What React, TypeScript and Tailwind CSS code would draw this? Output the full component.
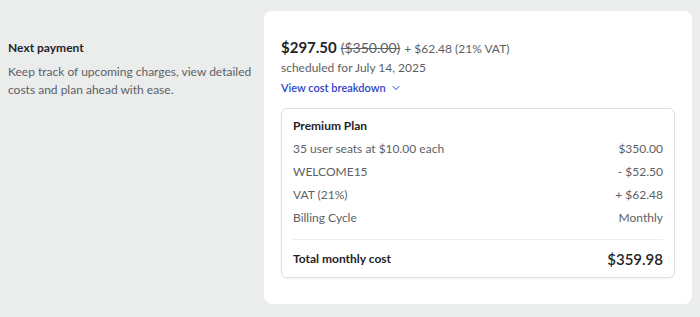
import { ChevronDown } from "lucide-react";

const rows = [
  { label: "35 user seats at $10.00 each", value: "$350.00" },
  { label: "WELCOME15", value: "- $52.50" },
  { label: "VAT (21%)", value: "+ $62.48" },
  { label: "Billing Cycle", value: "Monthly" },
];

export default function App() {
  return (
    <div
      className="flex h-[317px] w-[700px] bg-[#ebecec] pt-[11px] pr-[8px]"
      style={{ fontFamily: "Lato, 'Liberation Sans', sans-serif" }}
    >
      <div className="w-[264px] shrink-0 pl-2 pt-[29px]">
        <h2 className="text-[12px] font-bold leading-[16px] text-[#1f2328]">Next payment</h2>
        <p className="mt-[7px] w-[245px] text-[12px] leading-[18px] text-[#5c6166]">
          Keep track of upcoming charges, view detailed costs and plan ahead with ease.
        </p>
      </div>

      <div className="h-[293px] flex-1 rounded-[8px] bg-white px-[17px] pt-[25px]">
        <div className="flex items-baseline gap-1 text-[#1f2328]">
          <span className="text-[15px] font-bold">$297.50</span>
          <span className="text-[14px] text-[#5c6166] line-through">($350.00)</span>
          <span className="text-[12px] text-[#5c6166]">+ $62.48 (21% VAT)</span>
        </div>
        <div className="mt-[1px] text-[12px] leading-[16px] text-[#5c6166]">scheduled for July 14, 2025</div>
        <button className="mt-[4px] flex items-center gap-[4px] text-[11px] font-semibold text-[#2f44c9]">
          View cost breakdown
          <ChevronDown size={12} strokeWidth={2} />
        </button>

        <div className="mt-[12px] rounded-[6px] border border-[#dcdfe2] px-[11px] pb-[8px] pt-[9px] shadow-[0_1px_2px_rgba(0,0,0,0.06)]">
          <div className="text-[12px] font-bold leading-[16px] text-[#1f2328]">Premium Plan</div>
          <div className="mt-[7px] flex flex-col gap-[7px]">
            {rows.map((r) => (
              <div key={r.label} className="flex justify-between text-[12px] leading-[16px] text-[#5c6166]">
                <span>{r.label}</span>
                <span>{r.value}</span>
              </div>
            ))}
          </div>
          <div className="mt-[13px] flex items-center justify-between border-t border-[#eceef0] pt-[9px]">
            <span className="text-[12px] font-bold leading-[20px] text-[#1f2328]">Total monthly cost</span>
            <span className="text-[15px] font-semibold leading-[20px] text-[#1f2328]">$359.98</span>
          </div>
        </div>
      </div>
    </div>
  );
}
